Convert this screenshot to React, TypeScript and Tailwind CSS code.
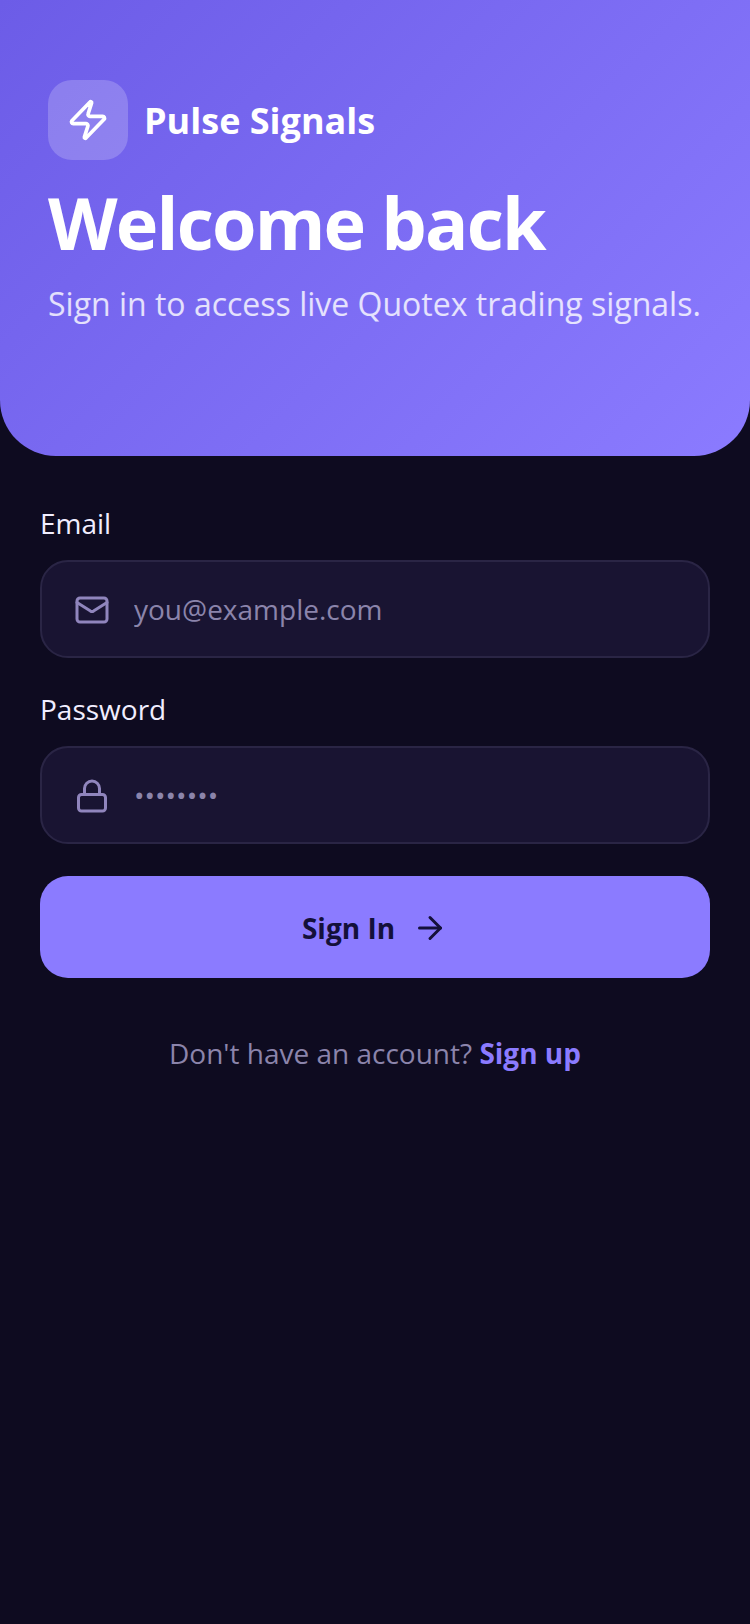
import { ArrowRight, Lock, Mail, Zap } from "lucide-react";

export default function App() {
  return (
    <div className="min-h-[1624px] bg-[#0e0b20] font-['Open_Sans',sans-serif]">
      <header className="h-[456px] rounded-b-[56px] bg-[linear-gradient(135deg,#6c5ce7,#8b7bff)] px-12 pt-20">
        <div className="flex items-center gap-4">
          <div className="flex h-20 w-20 items-center justify-center rounded-3xl bg-white/20">
            <Zap size={44} className="text-white" />
          </div>
          <span className="pt-0.5 text-[36px] font-bold leading-[48px] text-white">Pulse Signals</span>
        </div>
        <h1 className="mt-[18px] text-[72px] font-bold leading-[88px] tracking-[-1.8px] text-white">Welcome back</h1>
        <p className="mt-4 whitespace-nowrap text-[32px] leading-[44px] text-white/80">
          Sign in to access live Quotex trading signals.
        </p>
      </header>
      <main className="px-10 pt-[47px]">
        <label className="block text-[28px] leading-[40px] text-[#f1eeff]">Email</label>
        <div className="mt-[17px] flex h-[98px] items-center gap-6 rounded-[28px] border-2 border-[#2a2545] bg-[#191432] px-8">
          <Mail size={36} className="mt-0.5 shrink-0 text-[#9085bd]" />
          <input
            placeholder="you@example.com"
            className="min-w-0 flex-1 bg-transparent text-[28px] text-[#8b84ab] outline-none placeholder:text-[#8b84ab]"
          />
        </div>
        <label className="mt-[31px] block text-[28px] leading-[40px] text-[#f1eeff]">Password</label>
        <div className="mt-[17px] flex h-[98px] items-center gap-6 rounded-[28px] border-2 border-[#2a2545] bg-[#191432] px-8">
          <Lock size={36} className="mt-0.5 shrink-0 text-[#9085bd]" />
          <input
            type="password"
            placeholder="••••••••"
            className="min-w-0 flex-1 bg-transparent text-[28px] text-[#8b84ab] outline-none placeholder:text-[#8b84ab]"
          />
        </div>
        <button className="mt-8 flex h-[102px] w-full items-center justify-center gap-[17px] rounded-[28px] bg-[#8b7bff] text-[28px] font-bold text-[#14103a]">
          <span className="pt-0.5">Sign In</span>
          <ArrowRight size={36} className="mt-0.5" />
        </button>
        <p className="mt-[55px] text-center text-[28px] leading-[40px] text-[#8b84ab]">
          Don't have an account? <span className="font-bold text-[#8b7bff]">Sign up</span>
        </p>
      </main>
    </div>
  );
}
